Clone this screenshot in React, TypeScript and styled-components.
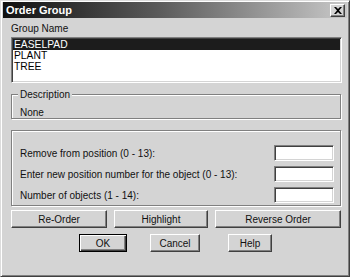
import React from "react";
import styled, { createGlobalStyle } from "styled-components";

const Global = createGlobalStyle`
  html, body { margin: 0; padding: 0; background: #d4d4d4; }
  body { font-family: "Liberation Sans", Arial, sans-serif; font-size: 10px; color: #111; }
  * { box-sizing: border-box; }
`;

const Face = "#d4d4d4";

const Window = styled.div`
  width: 350px;
  height: 277px;
  background: ${Face};
  border: 1px solid;
  border-color: #dcdcdc #404040 #404040 #dcdcdc;
  box-shadow: inset 1px 1px #ffffff, inset -1px -1px #808080;
  padding: 1px 2px 2px 2px;
  display: flex;
  flex-direction: column;
`;

const TitleBar = styled.div`
  height: 16px;
  display: flex;
  align-items: center;
  justify-content: space-between;
  padding: 0 2px 0 3px;
  background: linear-gradient(to right, #101010 0%, #5a5a5a 45%, #c8c8c8 100%);
`;

const Title = styled.span`
  color: #fff;
  font-weight: bold;
  font-size: 11px;
`;

const CloseButton = styled.div`
  width: 15px;
  height: 13px;
  background: ${Face};
  border: 1px solid;
  border-color: #fff #404040 #404040 #fff;
  box-shadow: inset -1px -1px #808080;
  display: flex;
  align-items: center;
  justify-content: center;
`;

const Body = styled.div`
  flex: 1;
  display: flex;
  flex-direction: column;
  padding: 4px 6px 0 8px;
`;

const Label = styled.div`
  height: 13px;
  line-height: 13px;
  margin-bottom: 2px;
`;

const ListBox = styled.div`
  height: 46px;
  width: 331px;
  background: #fff;
  border: 1px solid;
  border-color: #808080 #ffffff #ffffff #808080;
  box-shadow: inset 1px 1px #404040, inset -1px -1px #d4d4d4;
  padding: 1px;
  display: flex;
  flex-direction: column;
`;

const ListItem = styled.div<{ $selected?: boolean }>`
  height: 11px;
  line-height: 11px;
  padding-left: 1px;
  font-size: 10.3px;
  background: ${(p) => (p.$selected ? "#1c1c1c" : "transparent")};
  color: ${(p) => (p.$selected ? "#fff" : "#000")};
`;

const GroupBox = styled.div<{ $top: number; $height: number }>`
  position: relative;
  margin-top: ${(p) => p.$top}px;
  height: ${(p) => p.$height}px;
  width: 330px;
  border: 1px solid #808080;
  box-shadow: inset 1px 1px #ffffff, 1px 1px #ffffff;
`;

const Legend = styled.span`
  position: absolute;
  top: -7px;
  left: 6px;
  padding: 0 2px;
  background: ${Face};
  line-height: 13px;
`;

const DescText = styled.div`
  padding: 11px 0 0 8px;
  line-height: 13px;
`;

const FieldRows = styled.div`
  display: flex;
  flex-direction: column;
  gap: 5px;
  padding: 14px 6px 0 8px;
`;

const FieldRow = styled.div`
  display: flex;
  align-items: center;
  justify-content: space-between;
  height: 16px;
`;

const TextInput = styled.div`
  width: 60px;
  height: 16px;
  background: #fff;
  border: 1px solid;
  border-color: #808080 #ffffff #ffffff #808080;
  box-shadow: inset 1px 1px #404040, inset -1px -1px #d4d4d4;
`;

const ButtonRow = styled.div<{ $top: number; $left: number }>`
  display: flex;
  margin-top: ${(p) => p.$top}px;
  margin-left: ${(p) => p.$left}px;
`;

const Button = styled.div<{ $w: number; $gap?: number; $default?: boolean }>`
  width: ${(p) => p.$w}px;
  margin-left: ${(p) => p.$gap ?? 0}px;
  height: 18px;
  display: flex;
  align-items: center;
  justify-content: center;
  background: ${Face};
  border: 1px solid;
  border-color: ${(p) => (p.$default ? "#000" : "#ffffff #404040 #404040 #ffffff")};
  box-shadow: ${(p) =>
    p.$default
      ? "inset 1px 1px #ffffff, inset -1px -1px #404040, inset -2px -2px #808080"
      : "inset -1px -1px #808080"};
`;

export default function App() {
  return (
    <>
      <Global />
      <Window>
        <TitleBar>
          <Title>Order Group</Title>
          <CloseButton>
            <svg width="8" height="7" viewBox="0 0 8 7">
              <path d="M0 0h2l2 2 2-2h2L5 3.5 8 7H6L4 5 2 7H0l3-3.5z" fill="#000" />
            </svg>
          </CloseButton>
        </TitleBar>
        <Body>
          <Label>Group Name</Label>
          <ListBox>
            <ListItem $selected>EASELPAD</ListItem>
            <ListItem>PLANT</ListItem>
            <ListItem>TREE</ListItem>
          </ListBox>
          <GroupBox $top={11} $height={25}>
            <Legend>Description</Legend>
            <DescText>None</DescText>
          </GroupBox>
          <GroupBox $top={11} $height={76}>
            <FieldRows>
              <FieldRow>
                <span>Remove from position (0 - 13):</span>
                <TextInput />
              </FieldRow>
              <FieldRow>
                <span>Enter new position number for the object (0 - 13):</span>
                <TextInput />
              </FieldRow>
              <FieldRow>
                <span>Number of objects (1 - 14):</span>
                <TextInput />
              </FieldRow>
            </FieldRows>
          </GroupBox>
          <ButtonRow $top={4} $left={0}>
            <Button $w={96}>Re-Order</Button>
            <Button $w={94} $gap={7}>Highlight</Button>
            <Button $w={126} $gap={7}>Reverse Order</Button>
          </ButtonRow>
          <ButtonRow $top={6} $left={68}>
            <Button $w={48} $default>OK</Button>
            <Button $w={50} $gap={23}>Cancel</Button>
            <Button $w={44} $gap={28}>Help</Button>
          </ButtonRow>
        </Body>
      </Window>
    </>
  );
}
